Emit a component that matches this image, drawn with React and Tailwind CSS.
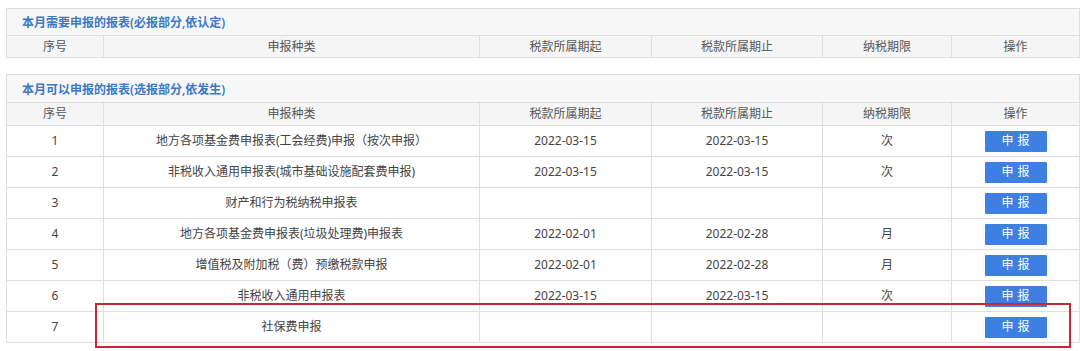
const cols = ["w-[97px]", "w-[376px]", "w-[172px]", "w-[171px]", "w-[129px]", "w-[128px]"];
const heads = ["序号", "申报种类", "税款所属期起", "税款所属期止", "纳税期限", "操作"];

const rows = [
  ["1", "地方各项基金费申报表(工会经费)申报（按次申报）", "2022-03-15", "2022-03-15", "次"],
  ["2", "非税收入通用申报表(城市基础设施配套费申报)", "2022-03-15", "2022-03-15", "次"],
  ["3", "财产和行为税纳税申报表", "", "", ""],
  ["4", "地方各项基金费申报表(垃圾处理费)申报表", "2022-02-01", "2022-02-28", "月"],
  ["5", "增值税及附加税（费）预缴税款申报", "2022-02-01", "2022-02-28", "月"],
  ["6", "非税收入通用申报表", "2022-03-15", "2022-03-15", "次"],
  ["7", "社保费申报", "", "", ""],
];

function Section({ title, tall, children }) {
  return (
    <table className="w-[1074px] border-collapse table-fixed">
      <colgroup>
        {cols.map((c, i) => (
          <col key={i} className={c} />
        ))}
      </colgroup>
      <thead>
        <tr className={`${tall ? "h-[28px]" : "h-[27px]"} bg-[#f7f7f7]`}>
          <th
            colSpan={6}
            className="border border-[#dedede] text-left pl-[15px] pt-[2px] text-[12px] font-semibold text-[#3b78c4]"
          >
            {title}
          </th>
        </tr>
        <tr className={`${tall ? "h-[23px]" : "h-[22px]"} bg-[#f5f5f5]`}>
          {heads.map((h) => (
            <th key={h} className="border border-[#dedede] text-[12px] font-normal text-[#555]">
              {h}
            </th>
          ))}
        </tr>
      </thead>
      <tbody>{children}</tbody>
    </table>
  );
}

export default function App() {
  return (
    <div
      className="relative w-[1080px] h-[351px] bg-white overflow-hidden pt-[8px] pl-[6px]"
      style={{ fontFamily: '"Noto Sans", "Noto Sans CJK SC", sans-serif' }}
    >
      <Section title="本月需要申报的报表(必报部分,依认定)" />
      <div className="h-[16px]" />
      <Section title="本月可以申报的报表(选报部分,依发生)" tall>
        {rows.map((r) => (
          <tr key={r[0]} className="h-[31px] text-[12px] text-[#444]">
            {r.map((cell, i) => (
              <td key={i} className="border border-[#dedede] text-center">
                {cell}
              </td>
            ))}
            <td className="border border-[#dedede] text-center">
              <button className="w-[62px] h-[21px] bg-[#3d80e2] text-white text-[12px] tracking-[4px] pl-[4px] rounded-[1px]">
                申报
              </button>
            </td>
          </tr>
        ))}
      </Section>
      <div className="absolute left-[95px] top-[303px] w-[976px] h-[45px] border-[2px] border-[#c42a35] pointer-events-none" />
    </div>
  );
}
